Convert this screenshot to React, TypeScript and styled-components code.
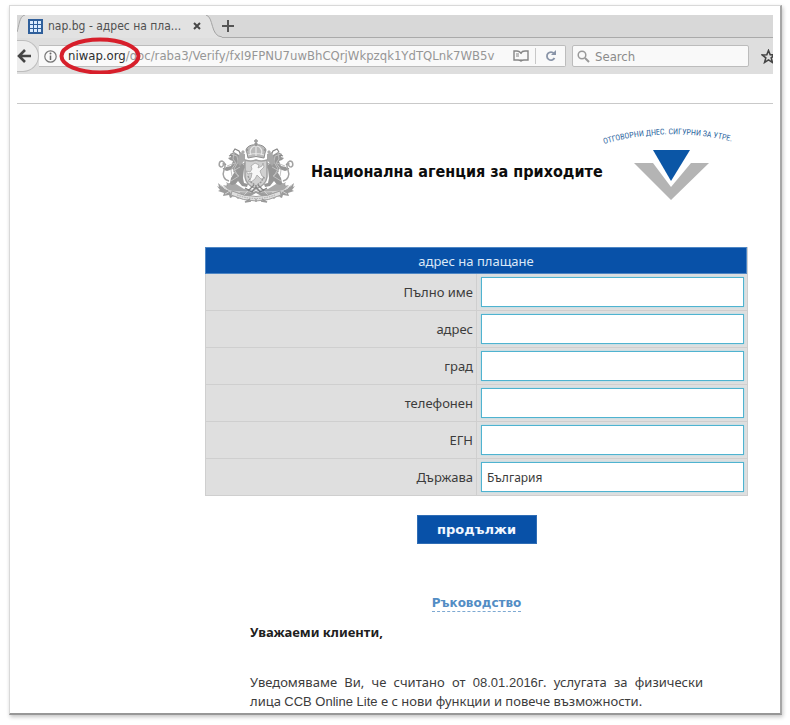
import React from "react";
import styled, { createGlobalStyle } from "styled-components";

const Global = createGlobalStyle`
  * { box-sizing: border-box; }
  body { margin: 0; background: #fff; color: #3c3c3c; font: 13px/18px "Noto Sans", "Open Sans", sans-serif; }
  button, input { font: inherit; color: inherit; margin: 0; }
  svg { display: block; flex: none; }
`;

const Frame = styled.main`
  margin: 5px 8px 10px 9px;
  padding: 9px 7px 2px;
  border: 1px solid #d9d9d9;
  border-right: 2px solid #a6a6a6;
  border-bottom: 2px solid #979797;
  box-shadow: 1px 2px 4px #c4c4c4;
`;

const Chrome = styled.header`
  overflow: hidden;
  background: #dedede;
  font: 13px/18px "DejaVu Sans Condensed", "Noto Sans", sans-serif;
`;

const TabStrip = styled.div`
  display: flex;
  height: 23px;
  background: #d8d8d8;
  border-bottom: 1px solid #aaa;
`;

const Tab = styled.div`
  display: flex;
  align-items: center;
  height: 23px;
  color: #505050;
`;

const TabBody = styled.div`
  display: flex;
  align-items: center;
  gap: 5px;
  width: 180px;
  height: 23px;
  padding: 0 5px 1px 2px;
  background: #e2e2e2;
`;

const TabTitle = styled.span`
  flex: 1;
  font-size: 12px;
  white-space: nowrap;
`;

const IconButton = styled.button`
  display: flex;
  align-items: center;
  justify-content: center;
  flex: none;
  padding: 0;
  border: 0;
  background: none;
  color: #4a4a4a;
`;

const NewTab = styled(IconButton)`
  width: 12px;
  height: 22px;
`;

const Toolbar = styled.div`
  display: flex;
  align-items: center;
  height: 36px;
`;

const BackButton = styled(IconButton)`
  justify-content: flex-start;
  width: 22px;
  height: 32px;
  border: 1px solid #bdbdbd;
  border-left: 0;
  border-radius: 0 16px 16px 0;
  background: #ededed;
`;

const AddressBar = styled.div`
  position: relative;
  display: flex;
  align-items: center;
  flex: 1;
  min-width: 0;
  height: 22px;
  padding-left: 5px;
  border: 1px solid #bcbcbc;
  border-left: 0;
  border-radius: 0 2px 2px 0;
  background: #f9f9f9;
  color: #969696;
`;

const Address = styled.span`
  flex: 1;
  min-width: 0;
  margin: 0 18px 0 11px;
  overflow: hidden;
  white-space: nowrap;
`;

const Host = styled.span`
  color: #2e2e2e;
`;

const Marker = styled.svg`
  position: absolute;
  left: 20px;
  top: -9px;
`;

const Reload = styled(IconButton)`
  width: 30px;
  height: 16px;
  margin-left: 6px;
  border-left: 1px solid #c8c8c8;
`;

const SearchBox = styled.label`
  display: flex;
  align-items: center;
  gap: 5px;
  flex: none;
  width: 177px;
  height: 22px;
  margin: 0 12px 0 6px;
  padding-left: 4px;
  border: 1px solid #bcbcbc;
  border-radius: 2px;
  background: #f9f9f9;
`;

const SearchInput = styled.input`
  min-width: 0;
  width: 100%;
  height: 20px;
  padding: 0;
  border: 0;
  outline: 0;
  background: none;
  &::placeholder { color: #8b8b8b; opacity: 1; }
`;

const StarButton = styled(IconButton)`
  width: 12px;
  overflow: hidden;
  justify-content: flex-start;
`;

const Page = styled.section`
  margin-top: 29px;
  padding: 22px 25px 0 188px;
  border-top: 1px solid #c9c9c9;
`;

const Banner = styled.div`
  display: flex;
  align-items: flex-start;
  height: 121px;
  padding: 0 9px 0 12px;
`;

const EmblemBox = styled.div`
  padding-top: 12px;
`;

const Agency = styled.h1`
  flex: 1;
  min-width: 0;
  margin: 35px 0 0 16px;
  color: #0c0c0c;
  font: bold 16px/22px "DejaVu Sans Condensed", "Noto Sans", sans-serif;
  white-space: nowrap;
`;

const Form = styled.form`
  display: flex;
  flex-direction: column;
  align-items: center;
`;

const Fields = styled.table`
  width: 100%;
  table-layout: fixed;
  border-collapse: separate;
  border-spacing: 0;
  border-right: 1px solid #cfcfcf;
  background: #dfdfdf;
`;

const Heading = styled.th`
  height: 27px;
  padding: 0;
  background: #0851a8;
  border: 1px solid #4e86c4;
  color: #dbe8f7;
  font-weight: normal;
`;

const LabelCell = styled.th`
  height: 37px;
  padding: 0 3px 0 0;
  border: 1px solid #cfcfcf;
  border-top: 0;
  text-align: right;
  font-weight: normal;
`;

const InputCell = styled.td`
  padding: 3px 3px 3px 4px;
  border-bottom: 1px solid #cfcfcf;
`;

const Field = styled.input`
  display: block;
  width: 100%;
  height: 30px;
  padding: 0 5px;
  border: 1px solid #4fb3d0;
  outline: 0;
  background: #fff;
  box-shadow: 0 0 2px #a5dcec;
  font-size: 12px;
`;

const Submit = styled.button`
  width: 120px;
  height: 29px;
  margin-top: 19px;
  padding: 0;
  border: 1px solid #2f6db5;
  background: #0851a8;
  color: #f1f7ff;
  font: bold 13px/18px "DejaVu Sans", sans-serif;
`;

const Guide = styled.a`
  margin-top: 52px;
  border-bottom: 1px dashed #7ea9d2;
  color: #538dc4;
  font: bold 12px/15px "DejaVu Sans", sans-serif;
  text-decoration: none;
`;

const Letter = styled.article`
  margin: 11px 45px 0;
`;

const Greeting = styled.p`
  margin: 0 0 32px;
  color: #202020;
  font: bold 13px/18px "Noto Sans", sans-serif;
`;

const Message = styled.p`
  margin: 0;
  font: 13px/18px "Noto Sans", sans-serif;
  text-align: justify;
`;

const Latin = styled.span`
  font-family: "Liberation Sans", Arial, sans-serif;
`;

const fields = [
  { id: "name", label: "Пълно име", value: "" },
  { id: "address", label: "адрес", value: "" },
  { id: "city", label: "град", value: "" },
  { id: "phone", label: "телефонен", value: "" },
  { id: "egn", label: "ЕГН", value: "" },
  { id: "country", label: "Държава", value: "България" },
];

const Favicon = () => (
  <svg width="15" height="15" viewBox="0 0 15 15">
    <rect width="15" height="15" fill="#2f5f9b" />
    {[2, 6, 10].map((y) => [2, 6, 10].map((x) => (
      <rect key={`${x}-${y}`} x={x} y={y} width="3" height="3" fill="#dcecff" />
    )))}
  </svg>
);

const Lion = () => (
  <g>
    <path d="M23 22l-1-5-5-3-4 2 1 3-3 1 2 2 3 1-2 5-5 1-2 3 3 1 6-2 1 4-3 5-1 5-4 2 2 2 6-1 4-5 4 5 5 1 1-3-4-1-1-5 1-9 4-4-2-3-4 2z" fill="#969696" />
    <path d="M14 16l6 2 1 6-4 7 4 7M17 15l-1 6 3 4-5 7 1 6M10 28l8-3M23 29l-7 4 6 5-8 5M24 24l3 3" fill="none" stroke="#c0c0c0" strokeWidth="1" />
    <path d="M16 14l2-3 4 2 2 4M12 18l3-1M9 27l-2-2M8 30l-2 1" fill="none" stroke="#858585" strokeWidth="1.2" />
    <path d="M12 43C7 42 5 37 7 32c2-4 1-8-2-9-3 0-4 5-1 6 2 0 3-2 2-4" fill="none" stroke="#a3a3a3" strokeWidth="1.5" />
    <path d="M23 14l5 2v6l-5 6-3-4z" fill="#a8a8a8" />
  </g>
);

const Leaves = () => (
  <g>
    <path d="M39 53C27 57 17 55 8 51l-7-6 1 4-2-1 3 4-2 1 6 2-1 3 6-1 1 3 5-2 3 3 4-3 5 2 9-5z" fill="#9c9c9c" />
    <path d="M39 52l-12-1-8-5-4 1-6-3 2 4-5-1 5 5 10 3 9 1z" fill="#a8a8a8" />
    <path d="M3 47l10 6 16 1 9-3M8 56l5-3 3 6 6-5 3 5 5-5" fill="none" stroke="#d0d0d0" strokeWidth="1" />
  </g>
);

const Emblem = () => (
  <svg width="78" height="66" viewBox="0 0 78 66" role="img" aria-label="Герб">
    <Lion />
    <g transform="translate(78 0) scale(-1 1)"><Lion /></g>
    <path d="M28 22q6 2 11 0 5 2 11 0v17q-1 8-11 12-10-4-11-12z" fill="#d0d0d0" stroke="#a0a0a0" strokeWidth="1.5" />
    <path d="M34 28l4-3 4 2-1 3 4-2 1-3 1 4-4 4 2 5 3 2-4 1-4-4-2 4-4 3-3-1 3-3 1-5-4 1-2-3 4 1 2-3z" fill="#f7f7f7" stroke="#a5a5a5" strokeWidth=".8" />
    <path d="M31 38l3 6 5 4 5-4 3-5" fill="none" stroke="#999" strokeWidth="1.5" strokeDasharray="2 1" />
    <path d="M30 15c-3-5 3-9 9-8 6-1 12 3 9 8l-1 5q-8-3-16 0z" fill="#bababa" stroke="#8f8f8f" />
    <path d="M34 17c-2-4 0-8 4-9M44 17c2-4 0-8-4-9M39 8v10M31 17q8-3 16 0" fill="none" stroke="#e8e8e8" strokeWidth="1.2" />
    <path d="M39 1v6M37 3h4" stroke="#999" strokeWidth="1.3" />
    <circle cx="39" cy="6" r="1.7" fill="#969696" />
    <circle cx="30" cy="12" r="1.3" fill="#999" /><circle cx="48" cy="12" r="1.3" fill="#999" />
    <path d="M24 14l2-2 2 2-2 2zM50 14l2-2 2 2-2 2z" fill="#aaa" />
    <Leaves />
    <g transform="translate(78 0) scale(-1 1)"><Leaves /></g>
    <path d="M28 50l7 4 4-5 4 5 7-4M31 53l6-6M47 53l-6-6" fill="none" stroke="#858585" strokeWidth="1.3" />
    <path d="M15 53q24 11 48 0l1 4q-25 12-50 0z" fill="#dedede" stroke="#a0a0a0" />
    <path d="M20 57q19 7 38 0" fill="none" stroke="#aaa" strokeWidth="1" strokeDasharray="1.5 1" />
    <path d="M33 61l-5 3 6-1M45 61l5 3-6-1M39 61v3" fill="none" stroke="#999" strokeWidth="1.3" />
  </svg>
);

const AgencyLogo = () => (
  <svg width="138" height="74" viewBox="0 0 138 74" role="img" aria-label="Отговорни днес. Сигурни за утре.">
    <path id="motto-curve" d="M3 18Q69 -1 137 17" fill="none" />
    <text fontFamily="Roboto Condensed, Roboto, sans-serif" fontSize="8" fill="#2f689f">
      <textPath href="#motto-curve">ОТГОВОРНИ ДНЕС. СИГУРНИ ЗА УТРЕ.</textPath>
    </text>
    <path d="M33 37h19l18 24 20-24h18L70 74z" fill="#b4b4b4" />
    <path d="M52 24h37L70 55z" fill="#0b56a6" />
  </svg>
);

export default function App() {
  return (
    <>
      <Global />
      <Frame>
        <Chrome>
          <TabStrip>
            <Tab>
              <svg width="9" height="23" viewBox="0 0 9 23">
                <path d="M0 23V17C2 12 2 0 9 0v23z" fill="#e2e2e2" />
                <path d="M0 17C2 12 2 1 8 0" fill="none" stroke="#a8a8a8" />
              </svg>
              <TabBody>
                <Favicon />
                <TabTitle>nap.bg - адрес на пла...</TabTitle>
                <IconButton aria-label="Close tab">
                  <svg width="8" height="8" viewBox="0 0 8 8"><path d="M1 1l6 6M7 1L1 7" stroke="#474747" strokeWidth="2" /></svg>
                </IconButton>
              </TabBody>
              <svg width="16" height="23" viewBox="0 0 16 23">
                <path d="M0 0C8 2 4 21 16 22v1H0z" fill="#e2e2e2" />
                <path d="M0 0C8 2 4 21 16 22" fill="none" stroke="#a3a3a3" />
              </svg>
            </Tab>
            <NewTab aria-label="New tab">
              <svg width="12" height="12" viewBox="0 0 12 12"><path d="M6 0v12M0 6h12" stroke="#555" strokeWidth="2" /></svg>
            </NewTab>
          </TabStrip>
          <Toolbar>
            <BackButton aria-label="Back">
              <svg width="14" height="14" viewBox="0 0 14 14"><path d="M8 1L2 7l6 6M3 7h11" fill="none" stroke="#454545" strokeWidth="2.6" /></svg>
            </BackButton>
            <AddressBar>
              <svg width="13" height="13" viewBox="0 0 13 13"><circle cx="6.5" cy="6.5" r="5.7" fill="none" stroke="#777" strokeWidth="1.2" /><path d="M6.5 5.5V10" fill="none" stroke="#666" strokeWidth="1.5" /><circle cx="6.5" cy="3.5" r="1" fill="#666" /></svg>
              <Address><Host>niwap.org</Host>/doc/raba3/Verify/fxI9FPNU7uwBhCQrjWkpzqk1YdTQLnk7WB5v</Address>
              <IconButton aria-label="Reader view">
                <svg width="16" height="12" viewBox="0 0 16 12" fill="none" stroke="#858585" strokeWidth="1.4"><path d="M8 3Q6 1 4 1H1v9h4q2 0 3 1 1-1 3-1h4V1h-3Q9 1 8 3z" /><path d="M3 4h3M3 6h3M8 3v1M8 9v2" strokeWidth="1" /></svg>
              </IconButton>
              <Reload aria-label="Reload">
                <svg width="12" height="12" viewBox="0 0 12 12"><path d="M9 3.5A4 4 0 1 0 9.5 8" fill="none" stroke="#8a95a8" strokeWidth="1.8" /><path d="M6 5h5V0z" fill="#8a95a8" /></svg>
              </Reload>
              <Marker width="82" height="38" viewBox="0 0 82 38"><ellipse cx="41" cy="19" rx="38.5" ry="16.5" fill="none" stroke="#d71f2b" strokeWidth="4" /></Marker>
            </AddressBar>
            <SearchBox>
              <svg width="13" height="13" viewBox="0 0 13 13"><circle cx="5" cy="5" r="3.8" fill="none" stroke="#999" strokeWidth="1.5" /><path d="M8 8l4 4" stroke="#999" strokeWidth="2" /></svg>
              <SearchInput aria-label="Search" placeholder="Search" />
            </SearchBox>
            <StarButton aria-label="Bookmark">
              <svg width="15" height="15" viewBox="0 0 15 15"><path d="M7.5 1.5l1.7 4.2 4.5.3-3.5 2.9 1.2 4.5-3.9-2.5-3.9 2.5 1.2-4.5L1.3 6l4.5-.3z" fill="none" stroke="#444" strokeWidth="1.6" /></svg>
            </StarButton>
          </Toolbar>
        </Chrome>
        <Page>
          <Banner>
            <EmblemBox><Emblem /></EmblemBox>
            <Agency>Национална агенция за приходите</Agency>
            <AgencyLogo />
          </Banner>
          <Form onSubmit={(e) => e.preventDefault()}>
            <Fields>
              <colgroup><col /><col width="270" /></colgroup>
              <thead><tr><Heading colSpan={2}>адрес на плащане</Heading></tr></thead>
              <tbody>
                {fields.map((f) => (
                  <tr key={f.id}>
                    <LabelCell scope="row"><label htmlFor={f.id}>{f.label}</label></LabelCell>
                    <InputCell><Field id={f.id} defaultValue={f.value} /></InputCell>
                  </tr>
                ))}
              </tbody>
            </Fields>
            <Submit type="submit">продължи</Submit>
            <Guide href="#guide">Ръководство</Guide>
          </Form>
          <Letter>
            <Greeting>Уважаеми клиенти,</Greeting>
            <Message>
              Уведомяваме Ви, че считано от <Latin>08.01.2016</Latin>г. услугата за физически лица <Latin>ССВ Online Lite</Latin> е с нови функции и повече възможности.
            </Message>
          </Letter>
        </Page>
      </Frame>
    </>
  );
}
